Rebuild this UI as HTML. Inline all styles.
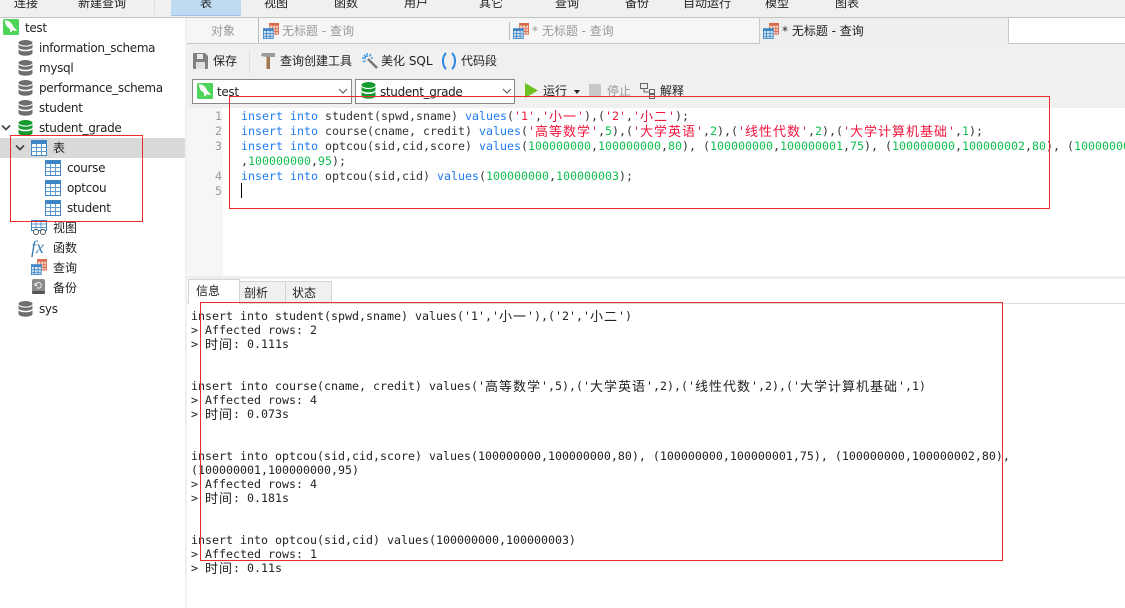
<!DOCTYPE html>
<html><head><meta charset="utf-8"><style>
*{box-sizing:border-box}
html,body{margin:0;padding:0;width:1125px;height:608px;overflow:hidden;background:#fff}
body{position:relative;font:12px "DejaVu Sans","Noto Sans CJK SC",sans-serif;color:#222}
.a{position:absolute;white-space:pre;letter-spacing:-.33px}
.z{letter-spacing:0}
.m{position:absolute;white-space:pre;font:11.63px/14px "DejaVu Sans Mono","Noto Sans CJK SC",monospace;color:#222}
.e{position:absolute;left:241px;white-space:pre;font:11.63px/15px "DejaVu Sans Mono","Noto Sans CJK SC",monospace;color:#333}
.e b{font-weight:normal;color:#1e7bf0}.e i{font-style:normal;color:#f0143c}.e u{text-decoration:none;color:#10c050}
s{text-decoration:none;font-size:13px;letter-spacing:1px;line-height:1px;position:relative;top:1px}
.n{position:absolute;left:190px;width:32px;text-align:right;font:11.63px/15px "DejaVu Sans Mono",monospace;color:#999}
.r{position:absolute;border:1px solid #ee2a2a}
.g{position:absolute}
.tx{position:absolute;font-size:12px;line-height:16px;white-space:pre}
</style></head><body>
<svg width="0" height="0" style="position:absolute"><defs>
<symbol id="db" viewBox="0 0 15 16" preserveAspectRatio="none"><ellipse cx="7.500" cy="2.800" rx="7" ry="2.800" fill="currentColor"/><path d="M.5 4.500v2.800c0 1.300 3 2.500 7 2.500s7-1.200 7-2.500V4.500c-1 1.400-3.500 2.100-7 2.100S1.500 5.900.5 4.500zM.5 9.200v3.800c0 1.500 3 2.700 7 2.700s7-1.200 7-2.700V9.200c-1 1.400-3.500 2.100-7 2.100S1.500 10.600.5 9.200z" fill="currentColor"/></symbol>
<symbol id="tb" viewBox="0 0 16 16"><rect x=".5" y=".5" width="15" height="15" fill="#fff" stroke="#3f86c6"/><rect x=".5" y=".5" width="15" height="3.500" fill="#3f86c6"/><path d="M5.500 4v11M10.500 4v11M1 7.500h14M1 11.500h14" stroke="#5c9bd2" fill="none"/></symbol>
<symbol id="qy" viewBox="0 0 18 18"><rect x="7.500" y=".5" width="10" height="12" fill="#f4d8cf" stroke="#d9694a"/><rect x="7" y="0" width="11" height="3" fill="#d9694a"/><path d="M11 3v9M14.500 3v9M7 6.500h11M7 9.500h11" stroke="#d9694a"/><rect x="0.500" y="6.500" width="11" height="11" fill="#d8e8f6" stroke="#3f86c6"/><rect x="0" y="6" width="12" height="3" fill="#3f86c6"/><path d="M4 9v8M8 9v8M1 12h10M1 15h10" stroke="#3f86c6"/></symbol>
<symbol id="my" viewBox="0 0 16 16"><rect width="16" height="16" rx="1.500" fill="#4fd45a"/><path d="M1.500 1.500c3.500-.5 6.500 1.500 8 4.500 1 2.300 2.500 4 5 5.500-1.800.5-3.300.3-4.500-.5-.5 1.300-1.500 2-3 2.500.4-1.300.4-2.500-.3-3.800C5 8.500 3 7.200 2.500 4.500z" fill="#fff"/></symbol>
</defs></svg>

<!-- top ribbon -->
<div class="g" style="left:0;top:0;width:1125px;height:18px;background:#f0f0f0;border-bottom:1px solid #c4c4c4"></div>
<div class="g" style="left:171px;top:0;width:70px;height:16px;background:#bfdbf2;border-bottom:1px solid #9cc3e6"></div>
<div class="g" style="left:154px;top:0;width:1px;height:15px;background:#ddd"></div>
<div class="tx" style="left:14px;top:-5px">连接</div>
<div class="tx" style="left:78px;top:-5px">新建查询</div>
<div class="tx" style="left:200px;top:-5px">表</div>
<div class="tx" style="left:264px;top:-5px">视图</div>
<div class="tx" style="left:334px;top:-5px">函数</div>
<div class="tx" style="left:404px;top:-5px">用户</div>
<div class="tx" style="left:479px;top:-5px">其它</div>
<div class="tx" style="left:555px;top:-5px">查询</div>
<div class="tx" style="left:625px;top:-5px">备份</div>
<div class="tx" style="left:683px;top:-5px">自动运行</div>
<div class="tx" style="left:765px;top:-5px">模型</div>
<div class="tx" style="left:835px;top:-5px">图表</div>

<!-- sidebar -->
<div class="g" style="left:185px;top:18px;width:2px;height:590px;background:#f0f0f0"></div>
<div class="g" style="left:0;top:138px;width:185px;height:20px;background:#d9d9d9"></div>
<svg class="g" style="left:3px;top:19px" width="16" height="16"><use href="#my"/></svg>
<div class="a" style="left:25px;top:21px">test</div>
<svg class="g" style="left:18px;top:40px;color:#6e6e6e" width="15" height="16"><use href="#db"/></svg>
<div class="a" style="left:39px;top:41px">information_schema</div>
<svg class="g" style="left:18px;top:60px;color:#6e6e6e" width="15" height="16"><use href="#db"/></svg>
<div class="a" style="left:39px;top:61px">mysql</div>
<svg class="g" style="left:18px;top:80px;color:#6e6e6e" width="15" height="16"><use href="#db"/></svg>
<div class="a" style="left:39px;top:81px">performance_schema</div>
<svg class="g" style="left:18px;top:100px;color:#6e6e6e" width="15" height="16"><use href="#db"/></svg>
<div class="a" style="left:39px;top:101px">student</div>
<svg class="g" style="left:18px;top:120px;color:#149a2e" width="15" height="16"><use href="#db"/></svg>
<div class="a" style="left:39px;top:121px">student_grade</div>
<svg class="g" style="left:1px;top:124px" width="10" height="8"><path d="M1 1.500l4 4 4-4" fill="none" stroke="#444" stroke-width="1.700"/></svg>
<svg class="g" style="left:15px;top:144px" width="10" height="8"><path d="M1 1.500l4 4 4-4" fill="none" stroke="#444" stroke-width="1.700"/></svg>
<svg class="g" style="left:31px;top:140px" width="16" height="16"><use href="#tb"/></svg>
<div class="a z" style="left:53px;top:139px">表</div>
<svg class="g" style="left:45px;top:160px" width="16" height="16"><use href="#tb"/></svg>
<div class="a" style="left:67px;top:161px">course</div>
<svg class="g" style="left:45px;top:180px" width="16" height="16"><use href="#tb"/></svg>
<div class="a" style="left:67px;top:181px">optcou</div>
<svg class="g" style="left:45px;top:200px" width="16" height="16"><use href="#tb"/></svg>
<div class="a" style="left:67px;top:201px">student</div>
<svg class="g" style="left:31px;top:220px" width="17" height="16"><rect x=".5" y=".5" width="15" height="10" fill="#fff" stroke="#3f86c6"/><path d="M5 1v9M10 1v9M1 4h14M1 7.500h14" stroke="#5c9bd2"/><circle cx="5" cy="12" r="2.500" fill="#fff" stroke="#555"/><circle cx="12" cy="12" r="2.500" fill="#fff" stroke="#555"/></svg>
<div class="a z" style="left:53px;top:219px">视图</div>
<div class="a z" style="left:31px;top:237px;font:italic 18px 'Liberation Serif',serif;color:#3f7fb8">fx</div>
<div class="a z" style="left:53px;top:239px">函数</div>
<svg class="g" style="left:31px;top:259px" width="16" height="16"><use href="#qy"/></svg>
<div class="a z" style="left:53px;top:259px">查询</div>
<svg class="g" style="left:32px;top:279px" width="14" height="16"><rect width="13" height="15" rx="2" fill="#8a8a8a"/><rect y="12" width="13" height="3" rx="1" fill="#555"/><path d="M3.800 6a2.800 2.800 0 1 1 1 2.500M3 4v2.500h2.500" fill="none" stroke="#eee"/></svg>
<div class="a z" style="left:53px;top:279px">备份</div>
<svg class="g" style="left:18px;top:301px;color:#6e6e6e" width="15" height="16"><use href="#db"/></svg>
<div class="a" style="left:39px;top:302px">sys</div>

<!-- tab bar -->
<div class="g" style="left:187px;top:18px;width:938px;height:26px;background:#f6f6f6;border-bottom:1px solid #c8c8c8"></div>
<div class="g" style="left:258px;top:18px;width:1px;height:25px;background:#bbb"></div>
<div class="g" style="left:509px;top:22px;width:1px;height:18px;background:#bbb"></div>
<div class="g" style="left:759px;top:18px;width:250px;height:27px;background:#efefef;border-left:1px solid #c8c8c8;border-right:1px solid #c8c8c8"></div>
<div class="g" style="left:1009px;top:18px;width:116px;height:26px;background:#fff;border-bottom:1px solid #c8c8c8"></div>
<div class="tx" style="left:211px;top:23px;color:#999">对象</div>
<svg class="g" style="left:263px;top:23px" width="16" height="16"><use href="#qy"/></svg>
<div class="tx" style="left:282px;top:23px;color:#999">无标题 - 查询</div>
<svg class="g" style="left:513px;top:23px" width="16" height="16"><use href="#qy"/></svg>
<div class="tx" style="left:532px;top:23px;color:#999">* 无标题 - 查询</div>
<svg class="g" style="left:763px;top:23px" width="16" height="16"><use href="#qy"/></svg>
<div class="tx" style="left:782px;top:23px">* 无标题 - 查询</div>

<!-- toolbar -->
<div class="g" style="left:187px;top:44px;width:938px;height:64px;background:#f0f0f0"></div>
<svg class="g" style="left:193px;top:53px" width="15" height="16"><path d="M0 1a1 1 0 0 1 1-1h11l3 3v12a1 1 0 0 1-1 1H1a1 1 0 0 1-1-1z" fill="#808080"/><rect x="4" y="1" width="6" height="5" fill="#e8e8e8"/><rect x="3" y="9" width="9" height="7" fill="#e0e0e0"/></svg>
<div class="tx" style="left:213px;top:53px">保存</div>
<div class="g" style="left:249px;top:50px;width:1px;height:23px;background:#ddd"></div>
<svg class="g" style="left:261px;top:53px" width="14" height="16"><path d="M1 0h13v4H9v0H5.500L0 3z" fill="#9a9a9a"/><rect x="5.500" y="4" width="3.500" height="12" fill="#a07a50"/></svg>
<div class="tx" style="left:280px;top:53px">查询创建工具</div>
<svg class="g" style="left:362px;top:53px" width="16" height="16"><path d="M6 6l9 9" stroke="#777" stroke-width="2.500"/><path d="M5 0v4M0 5h4M9 1l-1.500 2.500M1 9l2.500-1.500M9 5h2M2 2l2 2" stroke="#3a9ae8" stroke-width="1.500"/></svg>
<div class="tx" style="left:381px;top:53px">美化 SQL</div>
<svg class="g" style="left:441px;top:52px" width="16" height="18"><path d="M5 1C1 5 1 13 5 17M11 1c4 4 4 12 0 16" fill="none" stroke="#2a88e6" stroke-width="2"/></svg>
<div class="tx" style="left:461px;top:53px">代码段</div>

<div class="g" style="left:192px;top:79px;width:160px;height:25px;background:#fff;border:1px solid #888"></div>
<svg class="g" style="left:197px;top:83px" width="16" height="16"><use href="#my"/></svg>
<div class="a" style="left:217px;top:85px">test</div>
<svg class="g" style="left:338px;top:88px" width="10" height="7"><path d="M1 1l4 4 4-4" fill="none" stroke="#555"/></svg>
<div class="g" style="left:355px;top:79px;width:160px;height:25px;background:#fff;border:1px solid #888"></div>
<svg class="g" style="left:361px;top:82px;color:#149a2e" width="15" height="17"><use href="#db"/></svg>
<div class="a" style="left:380px;top:85px">student_grade</div>
<svg class="g" style="left:502px;top:88px" width="10" height="7"><path d="M1 1l4 4 4-4" fill="none" stroke="#555"/></svg>
<svg class="g" style="left:525px;top:83px" width="13" height="15"><path d="M0 0l13 7.500L0 15z" fill="#6cc024"/></svg>
<div class="tx" style="left:543px;top:83px">运行</div>
<svg class="g" style="left:574px;top:90px" width="6" height="4"><path d="M0 0h6L3 4z" fill="#222"/></svg>
<div class="g" style="left:589px;top:84px;width:12px;height:13px;background:#c8c8c8"></div>
<div class="tx" style="left:607px;top:83px;color:#999">停止</div>
<svg class="g" style="left:640px;top:83px" width="16" height="16"><path d="M.5.500h7v5h-7zM9.500 6.500h5v4h-5zM9.500 11.500h5v4h-5zM4 5.500v3.500h5.500" fill="none" stroke="#666"/></svg>
<div class="tx" style="left:660px;top:83px">解释</div>

<!-- editor -->
<div class="g" style="left:187px;top:108px;width:36px;height:168px;background:#f6f6f6"></div>
<div class="n" style="top:109px">1</div><div class="n" style="top:124px">2</div><div class="n" style="top:139px">3</div><div class="n" style="top:169px">4</div><div class="n" style="top:184px">5</div>
<div class="e" style="top:109px"><b>insert</b> <b>into</b> student(spwd,sname) <b>values</b>(<i>'1'</i>,<i>'<s>小一</s>'</i>),(<i>'2'</i>,<i>'<s>小二</s>'</i>);</div>
<div class="e" style="top:124px"><b>insert</b> <b>into</b> course(cname, credit) <b>values</b>(<i>'<s>高等数学</s>'</i>,<u>5</u>),(<i>'<s>大学英语</s>'</i>,<u>2</u>),(<i>'<s>线性代数</s>'</i>,<u>2</u>),(<i>'<s>大学计算机基础</s>'</i>,<u>1</u>);</div>
<div class="e" style="top:139px"><b>insert</b> <b>into</b> optcou(sid,cid,score) <b>values</b>(<u>100000000</u>,<u>100000000</u>,<u>80</u>), (<u>100000000</u>,<u>100000001</u>,<u>75</u>), (<u>100000000</u>,<u>100000002</u>,<u>80</u>), (<u>100000001</u></div>
<div class="e" style="top:154px">,<u>100000000</u>,<u>95</u>);</div>
<div class="e" style="top:169px"><b>insert</b> <b>into</b> optcou(sid,cid) <b>values</b>(<u>100000000</u>,<u>100000003</u>);</div>
<div class="g" style="left:241px;top:183px;width:1px;height:15px;background:#000"></div>

<!-- bottom tabs -->
<div class="g" style="left:187px;top:276px;width:938px;height:3px;background:#eee"></div>
<div class="g" style="left:187px;top:303px;width:938px;height:1px;background:#ddd"></div>
<div class="g" style="left:239px;top:281px;width:47px;height:22px;background:#f0f0f0;border:1px solid #d4d4d4"></div>
<div class="g" style="left:285px;top:281px;width:47px;height:22px;background:#f0f0f0;border:1px solid #d4d4d4"></div>
<div class="g" style="left:188px;top:279px;width:52px;height:25px;background:#fff;border:1px solid #d4d4d4;border-bottom:0"></div>
<div class="tx" style="left:196px;top:283px">信息</div>
<div class="tx" style="left:244px;top:285px">剖析</div>
<div class="tx" style="left:292px;top:285px">状态</div>

<!-- result -->
<div class="m" style="left:191px;top:309px">insert into student(spwd,sname) values('1','<s>小一</s>'),('2','<s>小二</s>')</div>
<div class="m" style="left:191px;top:323px">&gt; Affected rows: 2</div>
<div class="m" style="left:191px;top:337px">&gt; <s>时间</s>: 0.111s</div>
<div class="m" style="left:191px;top:379px">insert into course(cname, credit) values('<s>高等数学</s>',5),('<s>大学英语</s>',2),('<s>线性代数</s>',2),('<s>大学计算机基础</s>',1)</div>
<div class="m" style="left:191px;top:393px">&gt; Affected rows: 4</div>
<div class="m" style="left:191px;top:407px">&gt; <s>时间</s>: 0.073s</div>
<div class="m" style="left:191px;top:449px">insert into optcou(sid,cid,score) values(100000000,100000000,80), (100000000,100000001,75), (100000000,100000002,80),</div>
<div class="m" style="left:191px;top:463px">(100000001,100000000,95)</div>
<div class="m" style="left:191px;top:477px">&gt; Affected rows: 4</div>
<div class="m" style="left:191px;top:491px">&gt; <s>时间</s>: 0.181s</div>
<div class="m" style="left:191px;top:533px">insert into optcou(sid,cid) values(100000000,100000003)</div>
<div class="m" style="left:191px;top:547px">&gt; Affected rows: 1</div>
<div class="m" style="left:191px;top:561px">&gt; <s>时间</s>: 0.11s</div>

<!-- red boxes -->
<div class="r" style="left:10px;top:135px;width:133px;height:87px"></div>
<div class="r" style="left:229px;top:96px;width:821px;height:113px"></div>
<div class="r" style="left:200px;top:302px;width:803px;height:259px"></div>
</body></html>
